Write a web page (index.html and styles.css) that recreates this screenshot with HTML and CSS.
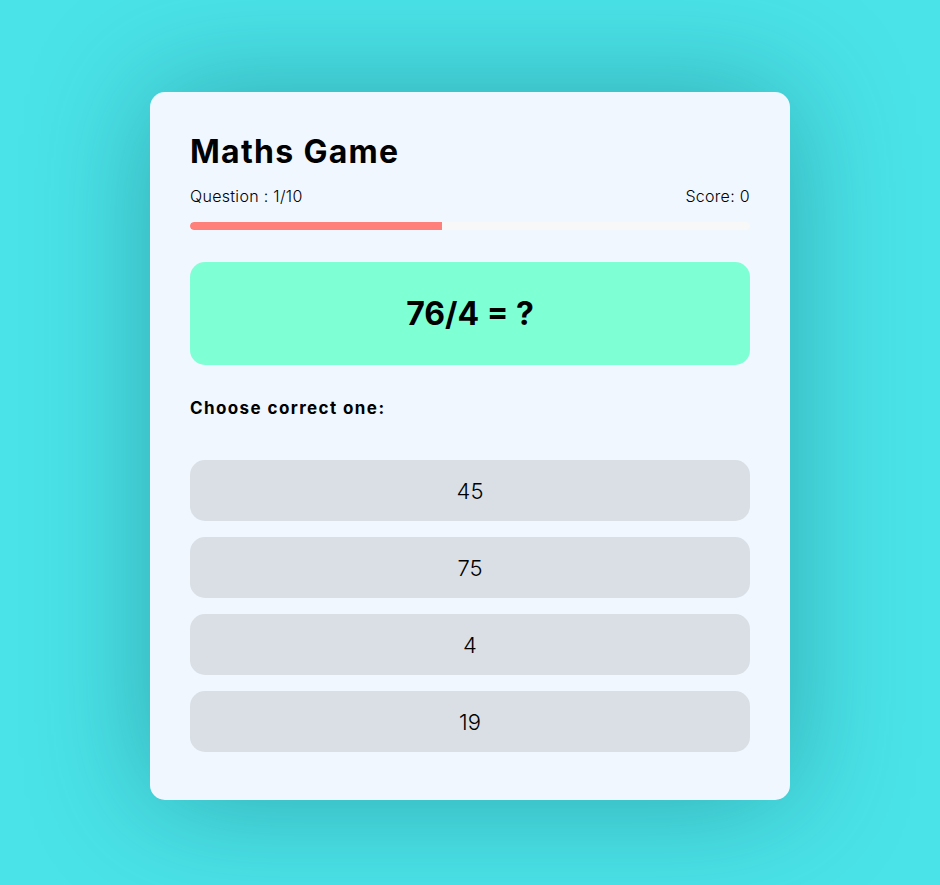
FILE: index.html
```html
<!DOCTYPE html>
<html>
<head>
<meta charset="utf-8">
<link rel="stylesheet" href="styles.css">
</head>
<body>
<main class="page">
  <section class="card">
    <h1 class="title">Maths Game</h1>
    <div class="stats">
      <span>Question : 1/10</span>
      <span>Score: 0</span>
    </div>
    <div class="progress"><div class="progress-fill" style="width:45%"></div></div>
    <div class="question">76/4 = ?</div>
    <p class="prompt">Choose correct one:</p>
    <div class="options">
      <button class="option">45</button>
      <button class="option">75</button>
      <button class="option">4</button>
      <button class="option">19</button>
    </div>
  </section>
</main>
</body>
</html>
```
FILE: styles.css
```css
* { box-sizing: border-box; }
html, body { margin: 0; padding: 0; }
body {
  font-family: "Inter", "Noto Sans", sans-serif;
  background: #4ae3e8;
  color: #000;
}
.page {
  min-height: 885px;
  display: flex;
  align-items: flex-start;
  justify-content: center;
  padding-top: 92px;
}
.card {
  width: 640px;
  background: #f0f7ff;
  border-radius: 15px;
  padding: 40px 40px 48px;
  box-shadow: 0 0 120px rgba(0, 60, 70, 0.35);
}
.title {
  margin: 0;
  font-size: 32px;
  line-height: 40px;
  font-weight: 700;
  letter-spacing: 1.3px;
}
.stats {
  margin-top: 14px;
  display: flex;
  justify-content: space-between;
  font-size: 16px;
  line-height: 20px;
  font-weight: 300;
  letter-spacing: 0.3px;
}
.progress {
  margin-top: 16px;
  height: 8px;
  border-radius: 4px;
  background: #f8f8f8;
  overflow: hidden;
}
.progress-fill {
  height: 100%;
  background: #ff7f7b;
  border-radius: 4px 0 0 4px;
}
.question {
  margin-top: 32px;
  height: 103px;
  border-radius: 15px;
  background: #7fffd4;
  display: flex;
  align-items: center;
  justify-content: center;
  font-size: 32px;
  font-weight: 700;
}
.prompt {
  margin: 33px 0 0;
  font-size: 17px;
  line-height: 20px;
  font-weight: 700;
  letter-spacing: 1.4px;
}
.options {
  margin-top: 42px;
  display: flex;
  flex-direction: column;
  gap: 16px;
}
.option {
  height: 61px;
  border: none;
  border-radius: 15px;
  background: #d9dfe5;
  font-family: inherit;
  font-size: 22px;
  font-weight: 300;
  color: #000;
}
```
